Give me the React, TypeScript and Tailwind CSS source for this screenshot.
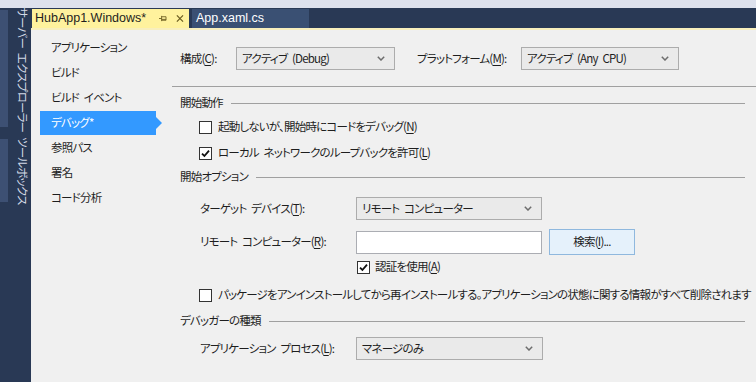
import React from "react";

const jp = "[font-family:'Noto_Sans_CJK_JP','Noto_Sans',sans-serif] [font-feature-settings:'palt']";

function Chevron() {
  return (
    <svg width="8" height="5" viewBox="0 0 8 5" className="text-[#6d6d6d]">
      <path d="M0.8 0.8 L4 4 L7.2 0.8" fill="none" stroke="currentColor" strokeWidth="1.5" />
    </svg>
  );
}

function Select({ value, width }: { value: string; width: string }) {
  return (
    <div className={`${width} h-[23px] flex items-center justify-between border border-[#acacac] bg-[#eaeaea] pl-[5px] pr-[9px] text-[#1e1e1e]`}>
      <span>{value}</span>
      <Chevron />
    </div>
  );
}

function Check({ checked }: { checked?: boolean }) {
  return (
    <div className="w-[13px] h-[13px] border border-[#333] bg-white flex items-center justify-center shrink-0">
      {checked && (
        <svg width="9" height="9" viewBox="0 0 9 9">
          <path d="M1 4.6 L3.4 7 L8 1.6" fill="none" stroke="#111" strokeWidth="1.8" />
        </svg>
      )}
    </div>
  );
}

function Key({ k }: { k: string }) {
  return <span className="underline underline-offset-2">{k}</span>;
}

function Heading({ text, h }: { text: string; h: string }) {
  return (
    <div className={`${h} flex items-center gap-[8px] pr-[11px]`}>
      <span>{text}</span>
      <div className="flex-1 h-px bg-[#a0a0a0]" />
    </div>
  );
}

const navItems = ["アプリケーション", "ビルド", "ビルド イベント", "デバッグ*", "参照パス", "署名", "コード分析"];

export default function App() {
  return (
    <div className={`w-[756px] h-[382px] overflow-hidden flex flex-col bg-[#f0f0f0] text-[11.5px] tracking-[-0.8px] [word-spacing:3px] text-[#1e1e1e] ${jp}`}>
      {/* top strip */}
      <div className="h-[8px] bg-[#dde1ec] shrink-0" />
      <div className="flex flex-1 min-h-0">
        {/* left tool strip */}
        <div className="w-[31px] bg-[#293955] flex flex-col pt-[2px] shrink-0">
          <div className="h-[117px] flex">
            <div className="w-[8px] bg-[#3d5073]" />
            <div className="flex-1 flex justify-center pt-[2px] text-[#d3d9e6] whitespace-nowrap [writing-mode:vertical-rl] [text-orientation:sideways]">
              サーバー エクスプローラー
            </div>
          </div>
          <div className="h-[63px] mt-[12px] flex">
            <div className="w-[8px] bg-[#3d5073]" />
            <div className="flex-1 flex justify-center text-[#d3d9e6] whitespace-nowrap [writing-mode:vertical-rl] [text-orientation:sideways]">
              ツールボックス
            </div>
          </div>
        </div>

        <div className="flex-1 flex flex-col min-w-0">
          {/* tab bar */}
          <div className="h-[20px] bg-[#293955] flex items-end gap-[3px] pl-[1px] shrink-0 tracking-normal [word-spacing:normal] [font-family:'Liberation_Sans',sans-serif]">
            <div className="w-[157px] h-[19px] bg-[#fff29d] flex items-center pl-[3px] pr-[5px] text-[12.5px] text-[#1e1e1e]">
              <span>HubApp1.Windows*</span>
              <svg width="9" height="7" viewBox="0 0 9 7" className="ml-[13px]">
                <path d="M0 3.5 H3 M3 0.5 V6.5 M3 1.5 H8 V5.5 H3 M3 4.5 H8" fill="none" stroke="#6b5d20" strokeWidth="1" />
              </svg>
              <svg width="9" height="9" viewBox="0 0 9 9" className="ml-[9px]">
                <path d="M1 1 L8 8 M8 1 L1 8" stroke="#6b5d20" strokeWidth="1.4" />
              </svg>
            </div>
            <div className="w-[117px] h-[19px] bg-[#3a5073] flex items-center pl-[4px] text-[12.5px] text-white">
              App.xaml.cs
            </div>
          </div>
          <div className="h-[2px] bg-[#f8efbd] shrink-0" />

          <div className="flex flex-1 min-h-0">
            {/* nav */}
            <div className="w-[141px] shrink-0 pt-[5px] pl-[9px]">
              {navItems.map((n) => (
                <div key={n} className="h-[25px] flex items-center">
                  {n === "デバッグ*" ? (
                    <div className="relative w-[116px] h-[24px] bg-[#3399ff] text-white flex items-center pl-[11px]">
                      {n}
                      <div className="absolute right-[-6px] top-[6px] w-0 h-0 border-y-[6px] border-y-transparent border-l-[6px] border-l-[#3399ff]" />
                    </div>
                  ) : (
                    <span className="pl-[11px]">{n}</span>
                  )}
                </div>
              ))}
            </div>

            {/* content */}
            <div className="flex-1 flex flex-col min-w-0">
              <div className="mt-[17px] h-[23px] flex items-center pl-[8px]">
                <span className="w-[56px]">構成(<Key k="C" />):</span>
                <Select value="アクティブ (Debug)" width="w-[159px]" />
                <span className="ml-[22px] w-[104px]">プラットフォーム(<Key k="M" />):</span>
                <Select value="アクティブ (Any CPU)" width="w-[158px]" />
              </div>
              <div className="mt-[16px] h-px bg-[#a0a0a0]" />

              <div className="pl-[8px] flex flex-col">
                <Heading text="開始動作" h="mt-[4px] h-[24px]" />
                <div className="h-[24px] flex items-center gap-[6px] pl-[19px]">
                  <Check />
                  <span>起動しないが、開始時にコードをデバッグ(<Key k="N" />)</span>
                </div>
                <div className="h-[28px] flex items-center gap-[6px] pl-[19px]">
                  <Check checked />
                  <span>ローカル ネットワークのループバックを許可(<Key k="L" />)</span>
                </div>
                <Heading text="開始オプション" h="h-[20px]" />

                <div className="mt-[10px] h-[23px] flex items-center pl-[20px]">
                  <span className="w-[156px]">ターゲット デバイス(<Key k="T" />):</span>
                  <Select value="リモート コンピューター" width="w-[186px]" />
                </div>
                <div className="mt-[9px] h-[26px] flex items-center pl-[20px]">
                  <span className="w-[156px]">リモート コンピューター(<Key k="R" />):</span>
                  <div className="w-[186px] h-[23px] bg-white border border-[#abadb3]" />
                  <div className="ml-[7px] w-[86px] h-[26px] bg-[#e5f1fb] border border-[#8fb8de] flex items-center justify-center">
                    検索(<Key k="I" />)...
                  </div>
                </div>
                <div className="h-[24px] flex items-center gap-[5px] pl-[177px]">
                  <Check checked />
                  <span>認証を使用(<Key k="A" />)</span>
                </div>
                <div className="h-[32px] flex items-center gap-[6px] pl-[19px] whitespace-nowrap">
                  <Check />
                  <span>パッケージをアンインストールしてから再インストールする。アプリケーションの状態に関する情報がすべて削除されます</span>
                </div>
                <Heading text="デバッガーの種類" h="h-[20px]" />
                <div className="mt-[6px] h-[23px] flex items-center pl-[20px]">
                  <span className="w-[156px]">アプリケーション プロセス(<Key k="L" />):</span>
                  <Select value="マネージのみ" width="w-[187px]" />
                </div>
              </div>
            </div>
          </div>
        </div>
      </div>
    </div>
  );
}
